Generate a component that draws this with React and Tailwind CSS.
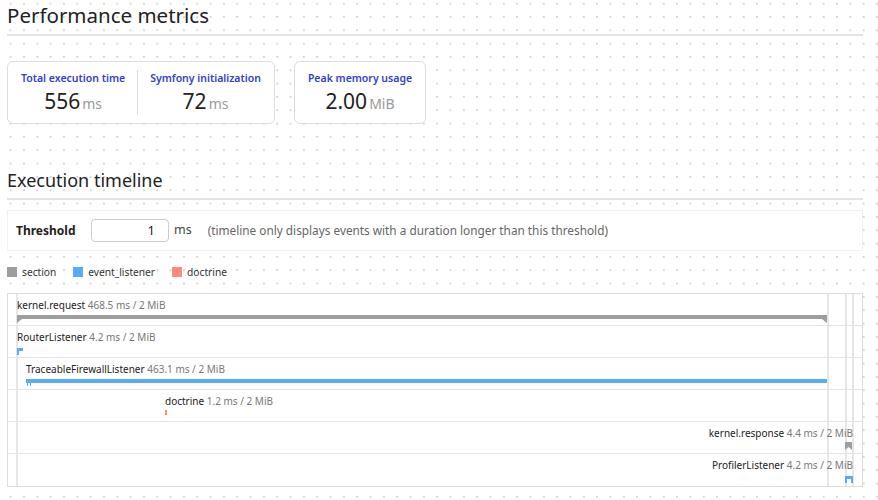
import React from "react";

const metrics = [
  [
    { label: "Total execution time", value: "556", unit: "ms" },
    { label: "Symfony initialization", value: "72", unit: "ms" },
  ],
  [{ label: "Peak memory usage", value: "2.00", unit: "MiB" }],
];

const legend = [
  { name: "section", color: "bg-[#9e9e9e]" },
  { name: "event_listener", color: "bg-[#56acfb]" },
  { name: "doctrine", color: "bg-[#fd8b79]" },
];

// left / width in px, relative to the timeline box
const events = [
  { name: "kernel.request", info: "468.5 ms / 2 MiB", left: 9, width: 810, kind: "section" },
  { name: "RouterListener", info: "4.2 ms / 2 MiB", left: 9, width: 6, kind: "listener" },
  { name: "TraceableFirewallListener", info: "463.1 ms / 2 MiB", left: 18, width: 801, kind: "listener" },
  { name: "doctrine", info: "1.2 ms / 2 MiB", left: 157, width: 2, kind: "doctrine" },
  { name: "kernel.response", info: "4.4 ms / 2 MiB", left: 837, width: 7, kind: "section", right: true },
  { name: "ProfilerListener", info: "4.2 ms / 2 MiB", left: 837, width: 8, kind: "listener", right: true },
];

const gridLines = [8, 819, 837, 844];

function Metric({ label, value, unit }) {
  return (
    <div className="flex flex-col items-center px-[12px]">
      <span className="text-[10.5px] font-semibold leading-4 text-[#3241d0]">{label}</span>
      <span className="mt-[3px] leading-6 text-[#222]">
        <span className="text-[21px]">{value}</span>
        <span className="ml-[2px] text-[14px] text-[#999]">{unit}</span>
      </span>
    </div>
  );
}

function Bar({ ev }) {
  if (ev.kind === "doctrine") {
    return <div className="absolute top-[20px] h-[5px] w-[2px] bg-[#fd8b79]" style={{ left: ev.left }} />;
  }
  if (ev.kind === "section" && ev.width > 20) {
    return (
      <div className="absolute top-[21px]" style={{ left: ev.left, width: ev.width }}>
        <div className="h-[4px] bg-[#9e9e9e]" />
        <svg className="absolute left-0 top-[4px]" width="5" height="4" viewBox="0 0 5 4">
          <polygon points="0,0 5,0 0,4" fill="#9e9e9e" />
        </svg>
        <svg className="absolute right-0 top-[4px]" width="5" height="4" viewBox="0 0 5 4">
          <polygon points="0,0 5,0 5,4" fill="#9e9e9e" />
        </svg>
      </div>
    );
  }
  if (ev.kind === "section") {
    return (
      <svg className="absolute top-[20px]" style={{ left: ev.left }} width="7" height="8" viewBox="0 0 7 8">
        <polygon points="0,0 7,0 7,8 3.5,5 0,8" fill="#9e9e9e" />
      </svg>
    );
  }
  if (ev.width > 20) {
    return (
      <div className="absolute top-[21px]" style={{ left: ev.left, width: ev.width }}>
        <div className="h-[4px] bg-[#56acfb]" />
        <div className="absolute left-[1px] top-[4px] h-[3px] w-[1px] bg-[#56acfb]" />
        <div className="absolute left-[4px] top-[4px] h-[3px] w-[1px] bg-[#56acfb]" />
      </div>
    );
  }
  return (
    <div className="absolute top-[22px]" style={{ left: ev.left, width: ev.width }}>
      <div className="h-[3px] bg-[#56acfb]" />
      <div className="absolute left-0 top-[3px] h-[4px] w-[2px] bg-[#56acfb]" />
      {ev.right && <div className="absolute right-0 top-0 h-[7px] w-[2px] bg-[#56acfb]" />}
    </div>
  );
}

export default function App() {
  return (
    <div
      className="min-h-[500px] w-full bg-white bg-[radial-gradient(circle,#d6d6d6_0.9px,transparent_1.1px)] bg-[length:13.33px_13.33px] bg-[position:4px_-3px] pl-[7px] pr-[15px] pt-[1px] text-[#222]"
      style={{ fontFamily: '"Noto Sans", "Open Sans", sans-serif' }}
    >
      <h2 className="border-b-2 border-[#e3e3e3] pb-[4px] text-[20.5px] leading-[29px] text-[#222]">
        Performance metrics
      </h2>

      <div className="mt-[25px] flex gap-[19px]">
        {metrics.map((group, gi) => (
          <div
            key={gi}
            className="flex h-[63px] items-center rounded-[6px] border border-[#ddd] bg-white px-[1px]"
          >
            {group.map((m, i) => (
              <React.Fragment key={m.label}>
                {i > 0 && <div className="h-[45px] w-px bg-[#ddd]" />}
                <Metric {...m} />
              </React.Fragment>
            ))}
          </div>
        ))}
      </div>

      <h3 className="mt-[42px] border-b-2 border-[#e3e3e3] pb-[4px] text-[18px] leading-[28px] text-[#222]">
        Execution timeline
      </h3>

      <div className="mt-[10px] flex h-[41px] items-center border border-[#f0f0f0] bg-white pl-[8px]">
        <span className="w-[75px] text-[12px] font-bold text-[#222]">Threshold</span>
        <div className="flex h-[23px] w-[78px] items-center justify-end rounded-[4px] border border-[#ccc] bg-white pr-[13px] text-[13px]">
          1
        </div>
        <span className="ml-[5px] text-[12.5px] text-[#444]">ms</span>
        <span className="ml-[16px] text-[11.8px] text-[#666]">
          (timeline only displays events with a duration longer than this threshold)
        </span>
      </div>

      <div className="mt-[13px] flex items-center gap-[17px] text-[10.2px] leading-4 text-[#333]">
        {legend.map((l) => (
          <div key={l.name} className="flex items-center gap-[5px]">
            <span className={`h-[10px] w-[10px] ${l.color}`} />
            <span>{l.name}</span>
          </div>
        ))}
      </div>

      <div className="relative mt-[13px] w-[856px] border border-[#ddd] bg-white">
        {gridLines.map((x) => (
          <div key={x} className="pointer-events-none absolute bottom-0 top-0 w-[2px] bg-[#e6e6e6]" style={{ left: x }} />
        ))}
        {events.map((ev, i) => (
          <div key={ev.name} className={`relative h-[32px] ${i < events.length - 1 ? "border-b border-[#e3e3e3]" : ""}`}>
            <div
              className="absolute top-[4px] whitespace-nowrap text-[10px] leading-[14px]"
              style={ev.right ? { right: 854 - 845 } : { left: ev.left }}
            >
              <span className="text-[#222]">{ev.name}</span>{" "}
              <span className="text-[#777]">{ev.info}</span>
            </div>
            <Bar ev={ev} />
          </div>
        ))}
      </div>
    </div>
  );
}
